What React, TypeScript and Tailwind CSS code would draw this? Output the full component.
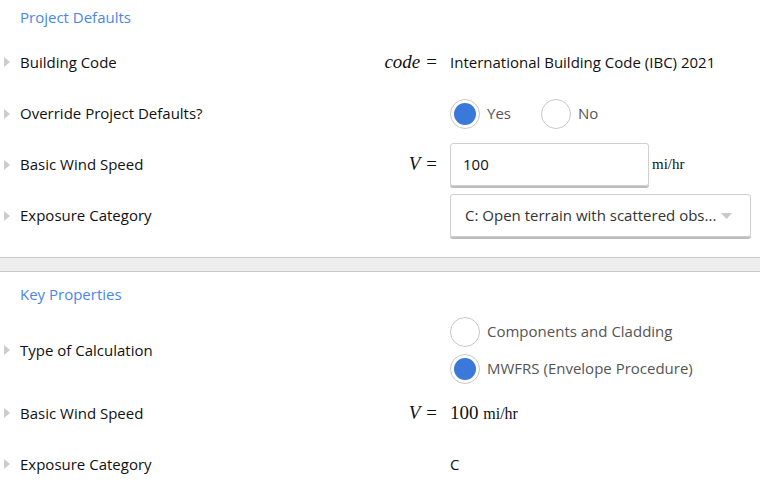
import React from "react";

const sans = { fontFamily: '"Open Sans", "Noto Sans", sans-serif' };
const serif = { fontFamily: '"Liberation Serif", "Times New Roman", serif' };

function Tri() {
  return (
    <span className="w-5 flex items-center pl-[4px]">
      <svg width="6" height="10" viewBox="0 0 6 10">
        <path d="M0 0 L6 5 L0 10 Z" fill="#cccccc" />
      </svg>
    </span>
  );
}

function Radio({ checked, label }: { checked?: boolean; label: string }) {
  return (
    <div className="flex items-center">
      <span className="w-[30px] h-[30px] rounded-full border border-[#c8c8c8] bg-white flex items-center justify-center">
        {checked && <span className="w-[22px] h-[22px] rounded-full bg-[#3a78d9]" />}
      </span>
      <span className="ml-[7px] text-[15px] text-[#555]">{label}</span>
    </div>
  );
}

function Eq({ v }: { v: string }) {
  return (
    <>
      <i>{v}</i>
      <span className="ml-[6px] text-[19px]">=</span>
    </>
  );
}

function Row({
  label,
  math,
  children,
  h,
}: {
  label: string;
  math?: React.ReactNode;
  children?: React.ReactNode;
  h: string;
}) {
  return (
    <div className={`flex items-center ${h}`}>
      <div className="w-[450px] flex items-center">
        <Tri />
        <span className="text-[15px] text-[#111]">{label}</span>
        <span className="flex-1 text-right pr-[13px] text-[19px] text-[#111]" style={serif}>
          {math}
        </span>
      </div>
      <div className="flex-1 flex items-center">{children}</div>
    </div>
  );
}

export default function App() {
  return (
    <div className="w-[760px] h-[487px] bg-white overflow-hidden" style={sans}>
      <div className="h-[36px] flex items-center pl-5 pb-[2px] text-[15px] text-[#4a86e8]">
        Project Defaults
      </div>
      <Row h="h-[52px]" label="Building Code" math={<Eq v="code" />}>
        <span className="text-[15px] text-[#111]">International Building Code (IBC) 2021</span>
      </Row>
      <Row h="h-[51px]" label="Override Project Defaults?">
        <div className="flex items-center gap-[30px]">
          <Radio checked label="Yes" />
          <Radio label="No" />
        </div>
      </Row>
      <Row h="h-[51px]" label="Basic Wind Speed" math={<Eq v="V" />}>
        <div className="w-[199px] h-[43px] border border-[#cfcfcf] rounded-[3px] shadow-[0_2px_0_#bdbdbd] flex items-center pl-3 text-[15px] text-[#111]">
          100
        </div>
        <span className="ml-[3px] text-[15px] text-[#111]" style={serif}>
          mi/hr
        </span>
      </Row>
      <Row h="h-[51px]" label="Exposure Category">
        <div className="w-[301px] h-[43px] border border-[#cfcfcf] rounded-[3px] shadow-[0_2px_0_#bdbdbd] flex items-center pl-[14px] pr-[18px] text-[15px] text-[#333]">
          <span className="flex-1">C: Open terrain with scattered obs...</span>
          <svg width="11" height="6" viewBox="0 0 11 6">
            <path d="M0 0 L11 0 L5.5 6 Z" fill="#c9c9c9" />
          </svg>
        </div>
      </Row>
      <div className="h-[16px]" />
      <div className="h-[15px] bg-[#eeeeee] border-y border-[#c8c8c8]" />
      <div className="h-[44px] flex items-center pl-5 text-[15px] text-[#4a86e8]">Key Properties</div>
      <Row h="h-[68px]" label="Type of Calculation">
        <div className="flex flex-col gap-[7px]">
          <Radio label="Components and Cladding" />
          <Radio checked label="MWFRS (Envelope Procedure)" />
        </div>
      </Row>
      <Row h="h-[58px]" label="Basic Wind Speed" math={<Eq v="V" />}>
        <span className="text-[19px] text-[#111]" style={serif}>
          100 <span className="text-[16px]">mi/hr</span>
        </span>
      </Row>
      <Row h="h-[44px]" label="Exposure Category">
        <span className="text-[15px] text-[#111]">C</span>
      </Row>
    </div>
  );
}
